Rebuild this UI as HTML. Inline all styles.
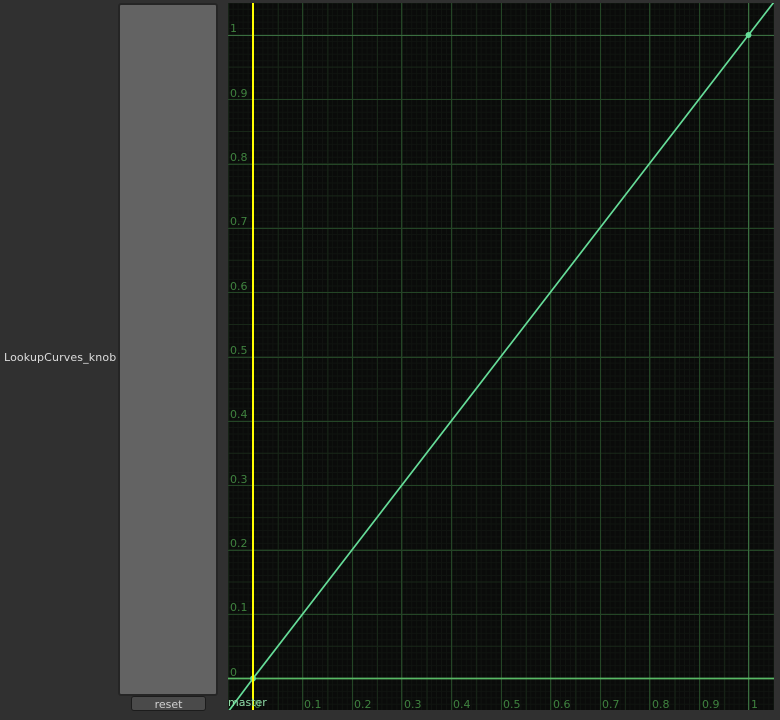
<!DOCTYPE html>
<html><head><meta charset="utf-8"><style>
html,body{margin:0;padding:0;background:#303030;width:780px;height:720px;overflow:hidden}
body{position:relative;font-family:"DejaVu Sans",sans-serif}
.lbl{position:absolute;left:4px;top:351px;font-size:11px;line-height:14px;color:#dcdcdc;white-space:nowrap;letter-spacing:.13px}
.panel{position:absolute;left:118px;top:3px;width:96px;height:689px;background:#636363;border:2px solid #252525;border-radius:3px}
.btn{position:absolute;left:131px;top:696px;width:73px;height:13px;background:#4a4a4a;border:1px solid #1c1c1c;border-radius:3px;color:#d0d0d0;font-size:11px;line-height:15px;text-align:center}
svg{position:absolute;left:0;top:0}
text{font-family:"DejaVu Sans",sans-serif;font-size:11px;fill:#3f823f}
</style></head><body>
<div class="lbl">LookupCurves_knob</div>
<div class="panel"></div>
<div class="btn">reset</div>
<svg width="780" height="720" viewBox="0 0 780 720">
<defs><clipPath id="c"><rect x="228" y="3" width="546" height="707"/></clipPath></defs>
<rect x="228" y="3" width="546" height="707" fill="#0a0b0a"/>
<g clip-path="url(#c)" fill="none">
<line x1="227.7" y1="356.5" x2="774" y2="356.5" stroke="#101410" stroke-width="707" stroke-dasharray="1 3.96"/>
<line x1="501" y1="678.98" x2="501" y2="3" stroke="#101410" stroke-width="546" stroke-dasharray="1 5.435"/>
<line x1="501" y1="678.98" x2="501" y2="710" stroke="#101410" stroke-width="546" stroke-dasharray="0 5.435 1 0"/>
<line x1="227.7" y1="356.5" x2="774" y2="356.5" stroke="#182718" stroke-width="707" stroke-dasharray="1 23.8" stroke-dashoffset="-0.5"/>
<line x1="501" y1="678.98" x2="501" y2="3" stroke="#182718" stroke-width="546" stroke-dasharray="1 31.175"/>
<line x1="501" y1="678.98" x2="501" y2="710" stroke="#182718" stroke-width="546" stroke-dasharray="0 31.175 1 0"/>
<g stroke="#244526" stroke-width="1">
<path d="M302.5 3V710M352.5 3V710M401.5 3V710M451.5 3V710M501.5 3V710M550.5 3V710M600.5 3V710M649.5 3V710M699.5 3V710"/>
<path d="M228 614.5H774M228 550.5H774M228 485.5H774M228 421.5H774M228 357.5H774M228 292.5H774M228 228.5H774M228 164.5H774M228 99.5H774"/>
</g>
<path d="M748.5 3V710" stroke="#3a6e40" stroke-width="1"/>
<path d="M228 35.5H774" stroke="#3a6e40" stroke-width="1"/>
<text x="230" y="32">1</text>
<text x="230" y="97">0.9</text>
<text x="230" y="161">0.8</text>
<text x="230" y="225">0.7</text>
<text x="230" y="290">0.6</text>
<text x="230" y="354">0.5</text>
<text x="230" y="418">0.4</text>
<text x="230" y="483">0.3</text>
<text x="230" y="547">0.2</text>
<text x="230" y="611">0.1</text>
<text x="230" y="676">0</text>
<text x="304" y="708">0.1</text>
<text x="354" y="708">0.2</text>
<text x="404" y="708">0.3</text>
<text x="453" y="708">0.4</text>
<text x="503" y="708">0.5</text>
<text x="553" y="708">0.6</text>
<text x="602" y="708">0.7</text>
<text x="652" y="708">0.8</text>
<text x="702" y="708">0.9</text>
<text x="751" y="708">1</text>
<text x="254" y="708">0</text>
<path d="M228 678.5H774" stroke="#58b864" stroke-width="1.8"/>
<path d="M228.5 711.3L253 678.5L748.5 35L774 2" stroke="#66dd99" stroke-width="1.7"/>
<circle cx="748.5" cy="35" r="3" fill="#66dd99"/>
<circle cx="253" cy="678.5" r="3" fill="#66dd99"/>
<path d="M253 3V710" stroke="#ffff00" stroke-width="2"/>
<text x="228" y="706" style="fill:#8fdca8">master</text>
</g>
</svg>
</body></html>
